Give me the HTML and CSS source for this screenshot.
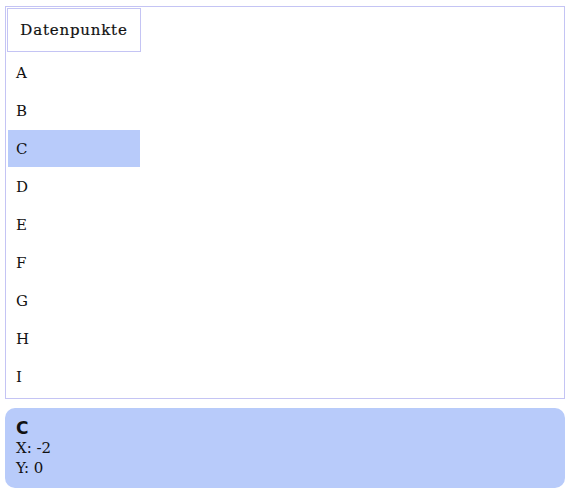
FILE: index.html
```html
<!DOCTYPE html>
<html>
<head>
<meta charset="utf-8">
<link rel="stylesheet" href="styles.css">
</head>
<body>
<div class="panel">
  <div class="list">
    <div class="list-head">Datenpunkte</div>
    <div class="item">A</div>
    <div class="item">B</div>
    <div class="item selected">C</div>
    <div class="item">D</div>
    <div class="item">E</div>
    <div class="item">F</div>
    <div class="item">G</div>
    <div class="item">H</div>
    <div class="item">I</div>
  </div>
</div>
<div class="info">
  <div class="info-title">C</div>
  <div class="info-line">X: -2</div>
  <div class="info-line">Y: 0</div>
</div>
</body>
</html>
```
FILE: styles.css
```css
body {
  margin: 6px 6px 0 5px;
  font-family: "DejaVu Serif", "Liberation Serif", serif;
  color: #111;
  background: #fff;
}
.panel {
  border: 1px solid #c4c4f4;
  padding: 1px;
  height: 389px;
  box-sizing: content-box;
}
.list {
  width: 134px;
  display: flex;
  flex-direction: column;
}
.list-head {
  border: 1px solid #c4c4f4;
  height: 42px;
  display: flex;
  align-items: center;
  justify-content: center;
  font-size: 15px;
  letter-spacing: 0.8px;
  margin-bottom: 2px;
  -webkit-text-stroke: 0.2px #111;
}
.item {
  height: 38px;
  flex: none;
  display: flex;
  align-items: center;
  padding-left: 8px;
  margin-left: 1px;
  width: 124px;
  font-size: 15px;
  font-weight: 300;
}
.selected {
  background: #b8cbfa;
  height: 37px;
  margin-bottom: 1px;
}
.info {
  margin-top: 9px;
  background: #b8cbfa;
  border-radius: 10px;
  padding: 10px 11px 10px;
  font-size: 15px;
  line-height: 20px;
}
.info-title {
  font-family: "DejaVu Sans", sans-serif;
  font-weight: bold;
  font-size: 17px;
  line-height: 20px;
}
.info-line {
  font-family: "DejaVu Serif", serif;
  font-size: 15px;
  line-height: 20px;
}
```
